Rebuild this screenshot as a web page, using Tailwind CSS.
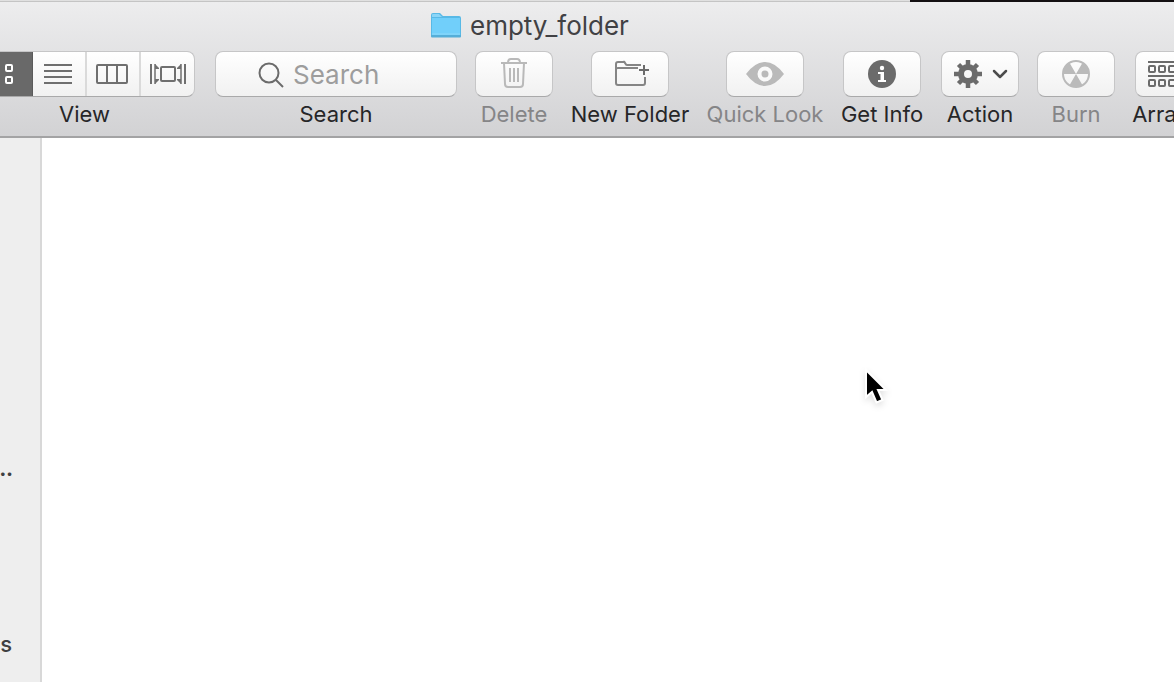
<!DOCTYPE html>
<html lang="en">
<head>
    <meta charset="UTF-8">
    <meta name="viewport" content="width=device-width, initial-scale=1.0">
    <title>empty_folder</title>
    <script src="https://cdn.jsdelivr.net/npm/@tailwindcss/browser@4"></script>
</head>
<body class="h-screen flex flex-col overflow-hidden bg-white font-['Inter',sans-serif] text-[22px] text-[#262628]">
    <!-- Desktop edge above the window -->
    <div class="flex h-0.5 shrink-0">
        <div class="w-[910px] bg-[#c4c4c4] border-t border-[#e0e0e0]"></div>
        <div class="flex-1 bg-[#141012]"></div>
    </div>

    <header class="shrink-0 overflow-hidden border-b-2 border-[#a3a3a4] bg-linear-to-b from-[#ededee] to-[#d2d2d4]">
        <!-- Title -->
        <div class="flex items-center gap-2 h-[49px] pl-[430px] pb-0.5">
            <svg class="w-8 h-7 shrink-0" viewBox="0 0 32 28">
                <path d="M1 3q0-2 2-2h7l3 3h16q2 0 2 2v17H1z" fill="#58b9e6"/>
                <path d="M2 3q0-1 1-1h6l3 3H2z" fill="#8bd5f7"/>
                <path d="M2 6h28v17H2z" fill="#71cffa"/>
                <path d="M1 23h30v1.500q0 1-1 1H2q-1 0-1-1z" fill="#55aed8"/>
                <path d="M2 22h28" stroke="#8fd9fa"/>
            </svg>
            <h1 class="text-[26px] leading-8 text-[#414144]">empty_folder</h1>
        </div>

        <!-- Toolbar -->
        <div class="flex gap-[18px] -ml-6 text-center whitespace-nowrap">
            <div class="w-[219px] shrink-0">
                <div class="flex h-[46px] rounded-lg overflow-hidden border border-[#c6c6c7] border-b-[#a9a9aa] bg-linear-to-b from-white to-[#f1f1f1] text-[#6f6f6f]">
                    <button aria-label="Icons" class="w-14 pr-2 flex items-center justify-center bg-[#696969] border-r border-[#5b5b5b] text-white">
                        <svg class="w-6 h-5" viewBox="0 0 24 20" fill="none" stroke="currentColor" stroke-width="2">
                            <rect x="1" y="1" width="6" height="6" rx="1"/><rect x="17" y="1" width="6" height="6" rx="1"/>
                            <rect x="1" y="13" width="6" height="6" rx="1"/><rect x="17" y="13" width="6" height="6" rx="1"/>
                        </svg>
                    </button>
                    <button aria-label="List" class="w-[54px] pr-0.5 flex items-center justify-center border-r-2 border-[#dadada]">
                        <svg class="w-7 h-6" viewBox="0 0 28 24" fill="none" stroke="currentColor" stroke-width="2"><path d="M0 3h28M0 9h28M0 15h28M0 21h28"/></svg>
                    </button>
                    <button aria-label="Columns" class="w-[54px] pr-0.5 flex items-center justify-center border-r-2 border-[#dadada]">
                        <svg class="w-8 h-6" viewBox="0 0 32 24" fill="none" stroke="currentColor" stroke-width="2"><rect x="1" y="3" width="30" height="18" rx="1"/><path d="M11 3v18M21 3v18"/></svg>
                    </button>
                    <button aria-label="Cover Flow" class="flex-1 flex items-center justify-center">
                        <svg class="w-9 h-6" viewBox="0 0 36 24" fill="none" stroke="currentColor" stroke-width="2"><rect x="11" y="5" width="14" height="14" rx="1"/><path d="M1 2v20M35 2v20"/><path d="M5 2v20M31 2v20" stroke-width="1.500"/><path d="M5 2l4 4v1H5zM5 22l4-4v-1H5zM31 2l-4 4v1h4zM31 22l-4-4v-1h4z" fill="currentColor" stroke="none"/></svg>
                    </button>
                </div>
                <div class="leading-[34px] pr-0.5">View</div>
            </div>

            <div class="w-[244px] shrink-0 pl-0.5">
                <div class="flex items-center gap-2 h-[46px] pl-[41px] pt-0.5 rounded-lg border border-[#c6c6c7] border-b-[#a9a9aa] bg-linear-to-b from-white to-[#f1f1f1]">
                    <svg class="w-7 h-7 shrink-0 text-[#6b6b6b]" viewBox="0 0 28 28" fill="none" stroke="currentColor" stroke-width="2"><circle cx="12" cy="12" r="9.500"/><path d="M19 19l7 7"/></svg>
                    <input id="search" type="text" placeholder="Search" class="w-full min-w-0 text-[26px] leading-8 bg-transparent outline-none placeholder:text-[#9d9d9d]">
                </div>
                <label for="search" class="block leading-[34px]">Search</label>
            </div>

            <div class="w-[78px] shrink-0 flex flex-col items-center">
                <button id="delete" aria-labelledby="delete-label" disabled class="w-[78px] h-[46px] flex items-center justify-center rounded-lg border border-[#c6c6c7] border-b-[#a9a9aa] bg-linear-to-b from-white to-[#f1f1f1] text-[#b9b9b9]">
                    <svg class="w-7 h-8" viewBox="0 0 28 32" fill="none" stroke="currentColor" stroke-width="2"><path d="M1 5h26M8 5q0-4 3-4h6q3 0 3 4M4 5l1 21q0 3 3 3h12q3 0 3-3l1-21"/><path d="M10 10v14M14 10v14M18 10v14"/></svg>
                </button>
                <div id="delete-label" class="leading-[34px] text-[#858587]">Delete</div>
            </div>

            <div class="w-[118px] shrink-0 flex flex-col items-center">
                <button aria-labelledby="folder-label" class="w-[78px] h-[46px] pl-1 flex items-center justify-center rounded-lg border border-[#c6c6c7] border-b-[#a9a9aa] bg-linear-to-b from-white to-[#f1f1f1] text-[#858585]">
                    <svg class="w-9 h-7" viewBox="0 0 36 28" fill="none" stroke="currentColor" stroke-width="2"><path d="M27 5H13q-1 0-2-2t-2-1H4Q2 2 2 4v19q0 2 2 2h25q2 0 2-2v-6M2 9q0-1 2-1h20"/><path d="M30 5v10M25 10h10" stroke="#6b6b6b"/></svg>
                </button>
                <div id="folder-label" class="leading-[34px]">New Folder</div>
            </div>

            <div class="w-[116px] shrink-0 flex flex-col items-center">
                <button aria-labelledby="look-label" disabled class="w-[78px] h-[46px] flex items-center justify-center rounded-lg border border-[#c6c6c7] border-b-[#a9a9aa] bg-linear-to-b from-white to-[#f1f1f1] text-[#bababa]">
                    <svg class="w-10 h-6" viewBox="0 0 40 24"><path d="M1 12Q10 0 20 0t19 12Q30 24 20 24T1 12z" fill="currentColor"/><circle cx="20" cy="12" r="5.500" fill="none" stroke="#fafafa" stroke-width="4"/></svg>
                </button>
                <div id="look-label" class="leading-[34px] text-[#858587]">Quick Look</div>
            </div>

            <div class="w-[82px] shrink-0 flex flex-col items-center">
                <button aria-labelledby="info-label" class="w-[78px] h-[46px] flex items-center justify-center rounded-lg border border-[#c6c6c7] border-b-[#a9a9aa] bg-linear-to-b from-white to-[#f1f1f1] text-[#6b6b6b]">
                    <svg class="w-7 h-7" viewBox="0 0 28 28"><circle cx="14" cy="14" r="14" fill="currentColor"/><circle cx="14" cy="8" r="2.200" fill="#fff"/><path d="M10 12h6v8h2v2h-8v-2h2.500v-6H10z" fill="#fff"/></svg>
                </button>
                <div id="info-label" class="leading-[34px]">Get Info</div>
            </div>

            <div class="w-[78px] shrink-0 flex flex-col items-center">
                <button aria-labelledby="action-label" class="w-[78px] h-[46px] pl-0.5 flex items-center justify-center gap-2.5 rounded-lg border border-[#c6c6c7] border-b-[#a9a9aa] bg-linear-to-b from-white to-[#f1f1f1] text-[#6b6b6b]">
                    <svg class="w-7 h-7" viewBox="0 0 28 28" fill="none" stroke="currentColor"><circle cx="14" cy="14" r="7" stroke-width="6"/><path d="M14 0v6M14 22v6M0 14h6M22 14h6M4.500 4.500L8 8M20 20l3.500 3.500M4.500 23.500L8 20M20 8l3.500-3.500" stroke-width="4.500"/></svg>
                    <svg class="w-4 h-4" viewBox="0 0 16 16" fill="none" stroke="#4c4c4c" stroke-width="2.500" stroke-linecap="round" stroke-linejoin="round"><path d="M2 5l6 6 6-6"/></svg>
                </button>
                <div id="action-label" class="leading-[34px]">Action</div>
            </div>

            <div class="w-[78px] shrink-0 flex flex-col items-center">
                <button aria-labelledby="burn-label" disabled class="w-[78px] h-[46px] flex items-center justify-center rounded-lg border border-[#c6c6c7] border-b-[#a9a9aa] bg-linear-to-b from-white to-[#f1f1f1] text-[#bababa]">
                    <svg class="w-7 h-7" viewBox="0 0 28 28"><circle cx="14" cy="14" r="13" fill="none" stroke="currentColor" stroke-width="2"/><path d="M14 14H1A13 13 0 0 1 7.500 2.700zM14 14l6.500-11.300A13 13 0 0 1 27 14zM14 14l6.500 11.300a13 13 0 0 1-13 0z" fill="currentColor"/></svg>
                </button>
                <div id="burn-label" class="leading-[34px] text-[#858587]">Burn</div>
            </div>

            <div class="w-[82px] shrink-0 flex flex-col items-center">
                <button aria-labelledby="arrange-label" class="w-[78px] h-[46px] flex items-center justify-center rounded-lg border border-[#c6c6c7] border-b-[#a9a9aa] bg-linear-to-b from-white to-[#f1f1f1] text-[#6b6b6b]">
                    <svg class="w-[54px] h-7" viewBox="0 0 54 28" fill="none" stroke="currentColor" stroke-width="2"><path d="M1 2h52M1 16h52"/><rect x="2" y="6" width="6" height="6" rx="1"/><rect x="12" y="6" width="6" height="6" rx="1"/><rect x="22" y="6" width="6" height="6" rx="1"/><rect x="32" y="6" width="6" height="6" rx="1"/><rect x="2" y="20" width="6" height="6" rx="1"/><rect x="12" y="20" width="6" height="6" rx="1"/><rect x="22" y="20" width="6" height="6" rx="1"/><rect x="32" y="20" width="6" height="6" rx="1"/></svg>
                </button>
                <div id="arrange-label" class="leading-[34px]">Arrange</div>
            </div>
        </div>
        <div class="h-[5px]"></div>
    </header>

    <div class="flex flex-1 min-h-0">
        <!-- Sidebar -->
        <nav class="w-[42px] shrink-0 overflow-hidden border-r-2 border-[#d8d8d8] bg-[#eeeeee] pt-[316px] font-medium text-[#3f3f42]">
            <a href="#" class="flex justify-end w-[13px] text-lg/8 font-black">…</a>
            <a href="#" class="flex justify-end w-3 leading-8 mt-[142px]">s</a>
        </nav>
        <main class="flex-1 bg-white"></main>
    </div>

    <!-- Pointer -->
    <svg class="absolute left-[862px] top-[367px] w-8 h-10 drop-shadow-md" viewBox="0 0 32 40">
        <path d="M4 3v27l6-5 4.500 10.500 6-2.500L16 23h8z" fill="#000" stroke="#fff" stroke-width="2"/>
    </svg>
</body>
</html>
